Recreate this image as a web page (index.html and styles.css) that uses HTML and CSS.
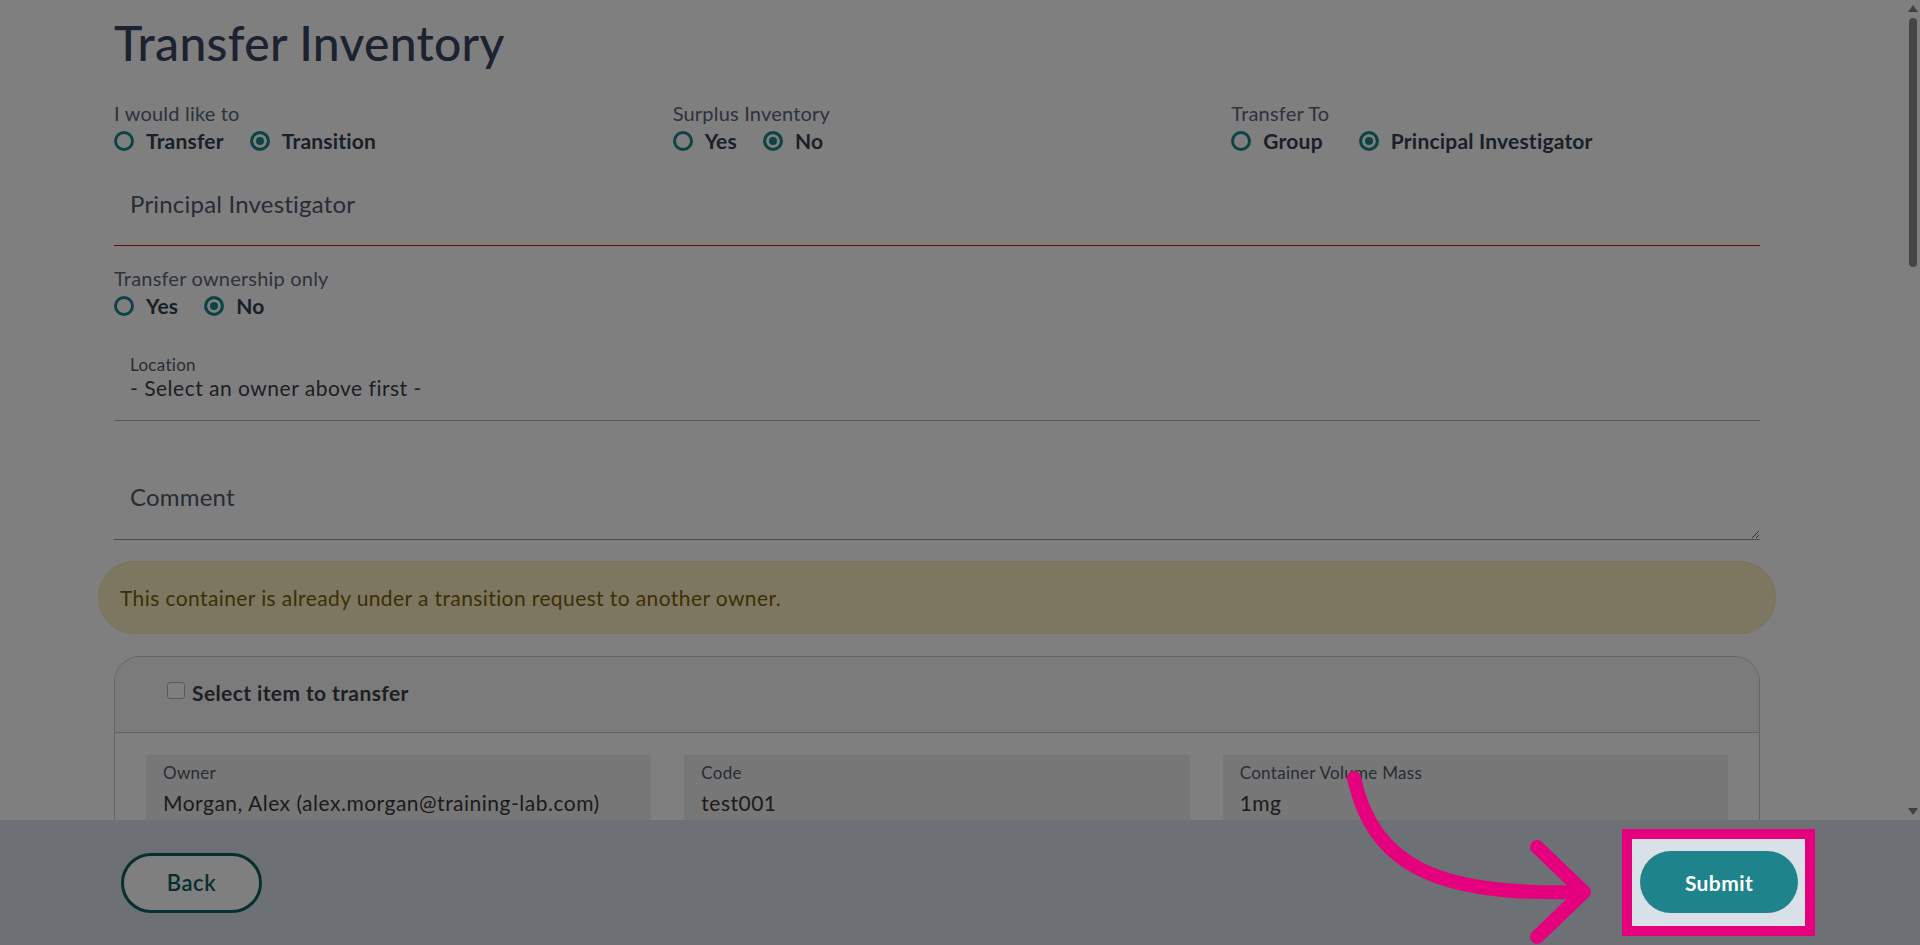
FILE: index.html
```html
<!DOCTYPE html>
<html lang="en">
  <head>
    <meta charset="utf-8" />
    <title>Transfer Inventory</title>
    <link rel="stylesheet" href="styles.css">
  </head>

  <body>
    <div class="viewport">
      <main class="scroller">
        <div class="page">
          <h1 class="title">Transfer Inventory</h1>

          <!--Top choices, three columns-->
          <div class="choices">
            <div class="choice">
              <div class="choiceLabel">I would like to</div>
              <div class="options">
                <label class="option"><input type="radio" name="mode"> Transfer</label>
                <label class="option"><input type="radio" name="mode" checked> Transition</label>
              </div>
            </div>
            <div class="choice">
              <div class="choiceLabel">Surplus Inventory</div>
              <div class="options">
                <label class="option"><input type="radio" name="surplus"> Yes</label>
                <label class="option"><input type="radio" name="surplus" checked> No</label>
              </div>
            </div>
            <div class="choice">
              <div class="choiceLabel">Transfer To</div>
              <div class="options">
                <label class="option wide"><input type="radio" name="target"> Group</label>
                <label class="option"><input type="radio" name="target" checked> Principal Investigator</label>
              </div>
            </div>
          </div>

          <input class="lineInput error" type="text" placeholder="Principal Investigator">

          <div class="choice ownership">
            <div class="choiceLabel">Transfer ownership only</div>
            <div class="options">
              <label class="option"><input type="radio" name="ownership"> Yes</label>
              <label class="option"><input type="radio" name="ownership" checked> No</label>
            </div>
          </div>

          <div class="selectBox">
            <div class="smallLabel">Location</div>
            <div class="selectValue">- Select an owner above first -</div>
          </div>

          <textarea class="comment" placeholder="Comment"></textarea>

          <div class="notice">This container is already under a transition request to another owner.</div>

          <div class="card">
            <div class="cardHead">
              <input type="checkbox" class="check">
              <span>Select item to transfer</span>
            </div>
            <div class="cardBody">
              <div class="fields">
                <div class="fieldBox"><div class="smallLabel">Owner</div><div class="fieldValue">Morgan, Alex (alex.morgan@training-lab.com)</div></div>
                <div class="fieldBox"><div class="smallLabel">Code</div><div class="fieldValue">test001</div></div>
                <div class="fieldBox"><div class="smallLabel">Container Volume Mass</div><div class="fieldValue">1mg</div></div>
              </div>
            </div>
          </div>
        </div>
      </main>

      <!--Scroll rail (drawn, the browser hides its own)-->
      <div class="rail">
        <div class="arrowUp"></div>
        <div class="thumb"></div>
        <div class="railSpace"></div>
        <div class="arrowDown"></div>
      </div>
    </div>

    <!--Bottom action bar-->
    <footer class="actions">
      <button class="btnBack" type="button">Back</button>
      <div class="spotlight">
        <button class="btnSubmit" type="button">Submit</button>
      </div>
    </footer>

    <!--Guide arrow pointing at Submit-->
    <svg class="pointer" width="1920" height="945" viewBox="0 0 1920 945">
      <path d="M1354 778 C1374 868 1440 896 1582 892" />
      <polyline points="1537,847 1584,892 1537,937" />
    </svg>
  </body>
</html>
```

FILE: styles.css
```css
body {margin: 0;
      height: 100vh;
      display: flex;
      flex-direction: column;
      overflow: hidden;
      font-family: Lato, "Liberation Sans", sans-serif;
      color: #343e50;
      background-color: white;}

.viewport {flex: 1;
           min-height: 0;
           display: flex;}

.scroller {flex: 1;
           overflow: hidden;}

.rail {width: 15px;
       display: flex;
       flex-direction: column;
       align-items: center;
       background: white;}

.arrowUp {margin-top: 5px;
          width: 0;
          height: 0;
          border-left: 5px solid transparent;
          border-right: 5px solid transparent;
          border-bottom: 7px solid #808080;}

.thumb {margin-top: 6px;
        width: 8px;
        height: 249px;
        border-radius: 4px;
        background: #8a8a8a;}

.railSpace {flex: 1;}

.arrowDown {margin-bottom: 5px;
            width: 0;
            height: 0;
            border-left: 5px solid transparent;
            border-right: 5px solid transparent;
            border-top: 7px solid #808080;}

.page {width: 1646px;
       padding-left: 114px;}

.title {margin: 0;
        padding-top: 14px;
        font-size: 48px;
        line-height: 58px;
        font-weight: 500;
        letter-spacing: 0.3px;
        color: #384460;}

.choices {margin-top: 29px;
          display: grid;
          grid-template-columns: 1fr 1fr 1fr;
          column-gap: 30px;}

.choiceLabel {font-size: 20px;
              line-height: 24px;
              letter-spacing: 0.2px;
              color: #5a6478;}

.options {margin-top: 4px;
          display: flex;}

.option {display: flex;
         align-items: center;
         margin-right: 26px;
         font-size: 21px;
         line-height: 24px;
         font-weight: 700;
         letter-spacing: 0.2px;
         color: #343e50;}

.option.wide {margin-right: 36px;}

.option input {appearance: none;
               margin: 0 12px 0 0;
               width: 20px;
               height: 20px;
               border: 3px solid #1d878d;
               border-radius: 50%;
               background: white;}

.option input:checked {background: #1d878d;
                       box-shadow: inset 0 0 0 3px white;}

.lineInput {display: block;
            box-sizing: border-box;
            width: 100%;
            height: 80px;
            margin-top: 13px;
            padding: 0 16px 5px;
            border: 0;
            border-bottom: 1px solid #dd1010;
            font-family: inherit;
            font-size: 24px;
            letter-spacing: 0.2px;
            color: #343e50;
            background: transparent;
            outline: none;}

.lineInput::placeholder,
.comment::placeholder {color: #4e586b;}

.ownership {margin-top: 20px;}

.selectBox {margin-top: 27px;
            padding: 10px 16px 19px;
            border-bottom: 1px solid #adb5bd;}

.smallLabel {font-size: 17px;
             line-height: 20px;
             letter-spacing: 0.3px;
             color: #505a6c;}

.selectValue {font-size: 21px;
              line-height: 26px;
              letter-spacing: 0.5px;
              color: #3a3f48;}

.comment {display: block;
          box-sizing: border-box;
          width: 100%;
          height: 90px;
          margin-top: 29px;
          padding: 33px 16px 0;
          border: 0;
          border-bottom: 1px solid #8f9bb3;
          font-family: inherit;
          font-size: 24px;
          line-height: 28px;
          letter-spacing: 0.2px;
          background: transparent;
          outline: none;
          resize: vertical;}

.notice {margin: 21px -16px 0;
         height: 73px;
         box-sizing: border-box;
         display: flex;
         align-items: center;
         padding: 0 21px;
         border-radius: 36px;
         background: #fbedc2;
         border: 1px solid #f6e6b2;
         font-size: 21px;
         letter-spacing: 0.4px;
         color: #7a5e08;}

.card {margin-top: 22px;
       border: 1px solid #c8c8c8;
       border-radius: 26px;
       overflow: hidden;}

.cardHead {display: flex;
           align-items: flex-start;
           padding: 24px 20px 27px 52px;
           background: #f7f7f7;
           border-bottom: 1px solid #c8c8c8;
           font-size: 21px;
           line-height: 24px;
           font-weight: 700;
           letter-spacing: 0.4px;
           color: #3a3f48;}

.check {appearance: none;
        margin: 1px 7px 0 0;
        width: 18px;
        height: 17px;
        border: 1px solid #b5b5b5;
        border-radius: 3px;
        background: white;}

.cardBody {padding: 22px 31px 31px;}

.fields {display: grid;
         grid-template-columns: 1fr 1fr 1fr;
         gap: 20px 33px;}

.fieldBox {padding: 8px 17px 10px;
           background: #eeeeee;}

.fieldValue {margin-top: 7px;
             font-size: 21px;
             line-height: 26px;
             letter-spacing: 0.5px;
             color: #383838;}

.actions {flex: none;
          height: 125px;
          display: flex;
          justify-content: space-between;
          align-items: center;
          padding: 0 105px 0 121px;
          background: #dae0e8;}

.btnBack {width: 141px;
          height: 60px;
          border: 3px solid #0f5e61;
          border-radius: 30px;
          background: white;
          font-family: inherit;
          font-size: 22px;
          font-weight: 600;
          letter-spacing: 0.5px;
          color: #0f5e61;}

/* highlight box: the big shadow dims the rest of the screen */
.spotlight {position: relative;
            z-index: 10;
            padding: 12px 7px 13px 8px;
            border: 10px solid #e5007d;
            box-shadow: 0 0 0 3000px rgba(0, 0, 0, 0.5);}

.btnSubmit {display: block;
            width: 158px;
            height: 62px;
            border: 0;
            border-radius: 31px;
            background: #1e838b;
            font-family: inherit;
            font-size: 21px;
            font-weight: 700;
            letter-spacing: 0.4px;
            color: white;}

.pointer {position: absolute;
          top: 0;
          left: 0;
          z-index: 20;
          pointer-events: none;
          fill: none;
          stroke: #e5007d;
          stroke-width: 14;
          stroke-linecap: round;
          stroke-linejoin: round;}
```
